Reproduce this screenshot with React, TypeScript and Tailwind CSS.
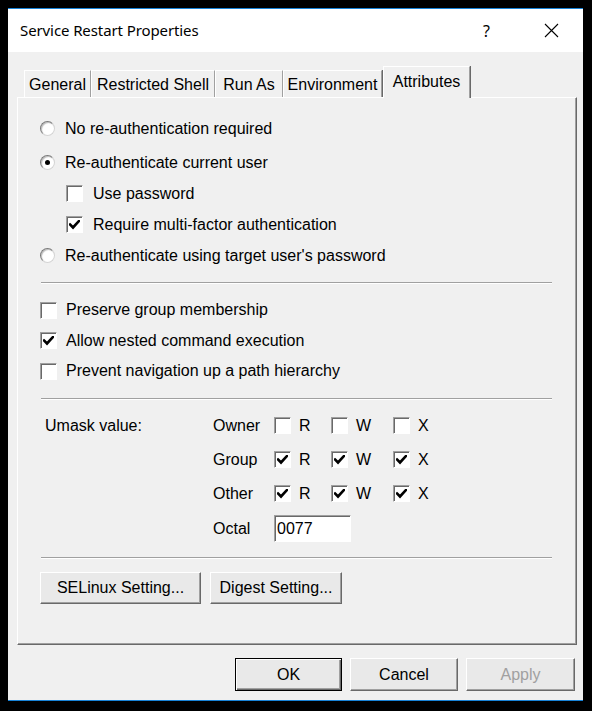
import React from "react";

const font = "font-['Liberation_Sans',Arial,sans-serif]";

function Check() {
  return (
    <svg width="11" height="10" viewBox="0 0 11 10" className="block">
      <path d="M1 4.5 L4 7.5 L10 1" fill="none" stroke="#000" strokeWidth="2.6" strokeLinecap="square" />
    </svg>
  );
}

function Box({ checked = false }: { checked?: boolean }) {
  return (
    <span className="flex h-[17px] w-[17px] shrink-0 items-center justify-center border border-t-[#a0a0a0] border-l-[#a0a0a0] border-r-white border-b-white bg-white shadow-[inset_1px_1px_0_#696969]">
      {checked && <Check />}
    </span>
  );
}

function Radio({ checked = false }: { checked?: boolean }) {
  return (
    <span className="flex h-[15px] w-[15px] shrink-0 items-center justify-center rounded-full border border-t-[#7a7a7a] border-l-[#7a7a7a] border-r-[#d4d4d4] border-b-[#d4d4d4] bg-white shadow-[inset_1px_1px_1px_#bdbdbd]">
      {checked && <span className="h-[5px] w-[5px] rounded-full bg-black" />}
    </span>
  );
}

function Sep() {
  return <div className="ml-[23px] mr-[24px] h-[2px] border-t border-t-[#a0a0a0] border-b border-b-white" />;
}

function Btn({ label, className = "", disabled = false, def = false }: { label: string; className?: string; disabled?: boolean; def?: boolean }) {
  return (
    <div
      className={`flex items-center justify-center bg-[#e9e9e9] ${
        def
          ? "border border-black shadow-[inset_1px_1px_0_#fff,inset_-1px_-1px_0_#696969,inset_-2px_-2px_0_#a0a0a0]"
          : "border border-t-white border-l-white border-r-[#696969] border-b-[#696969] shadow-[inset_-1px_-1px_0_#a0a0a0]"
      } ${disabled ? "text-[#a0a0a0]" : "text-black"} ${className}`}
    >
      {label}
    </div>
  );
}

const tabs = [
  { label: "General", w: "w-[67px]" },
  { label: "Restricted Shell", w: "w-[124px]" },
  { label: "Run As", w: "w-[68px]" },
  { label: "Environment", w: "w-[99px]" },
];

function Perm({ label, on, w }: { label: string; on: boolean; w: string }) {
  return (
    <div className={`flex items-center ${w}`}>
      <Box checked={on} />
      <span className="ml-[8px]">{label}</span>
    </div>
  );
}

function UmaskRow({ name, on }: { name: string; on: boolean }) {
  return (
    <div className="flex h-[34px] items-center">
      <span className="w-[61px]">{name}</span>
      <Perm label="R" on={on} w="w-[57px]" />
      <Perm label="W" on={on} w="w-[62px]" />
      <Perm label="X" on={on} w="w-[40px]" />
    </div>
  );
}

export default function App() {
  return (
    <div className={`h-[711px] w-[592px] bg-black pb-[10px] pl-[8px] pr-[9px] pt-[8px] text-[16px] text-black ${font}`}>
      <div className="flex h-full flex-col border-y border-[#1883d7] bg-[#f0f0f0]">
        <div className="flex h-[43px] shrink-0 items-center bg-white pl-[12px]">
          <span className="font-['Noto_Sans',sans-serif] text-[15px] tracking-[-0.1px]">Service Restart Properties</span>
          <span className="ml-auto mr-[54px] font-['Noto_Sans',sans-serif] text-[16px]">?</span>
          <svg width="15" height="15" viewBox="0 0 15 15" className="mr-[24px]">
            <path d="M1 1 L14 14 M14 1 L1 14" stroke="#000" strokeWidth="1.1" />
          </svg>
        </div>

        <div className="ml-[16px] mt-[14px] flex h-[31px] items-end">
          {tabs.map((t) => (
            <div
              key={t.label}
              className={`flex h-[27px] items-center justify-center border-l border-t border-l-white border-t-white border-r border-r-[#a0a0a0] pt-[1px] shadow-[1px_0_0_#696969] ${t.w}`}
            >
              {t.label}
            </div>
          ))}
          <div className="relative z-10 -mb-[1px] ml-[1px] flex h-[32px] w-[87px] items-start justify-center border-l border-t border-l-white border-t-white border-r border-r-[#a0a0a0] bg-[#f0f0f0] pt-[3px] shadow-[1px_0_0_#696969]">
            Attributes
          </div>
        </div>

        <div className="ml-[9px] flex h-[548px] w-[560px] flex-col border border-t-white border-l-white border-r-[#696969] border-b-[#696969] shadow-[inset_-1px_-1px_0_#a0a0a0]">
          <div className="pl-[22px] pt-[15px]">
            <div className="flex h-[31px] items-center">
              <Radio />
              <span className="ml-[10px]">No re-authentication required</span>
            </div>
            <div className="mt-[3px] flex h-[31px] items-center">
              <Radio checked />
              <span className="ml-[10px]">Re-authenticate current user</span>
            </div>
            <div className="flex h-[31px] items-center pl-[26px]">
              <Box />
              <span className="ml-[10px]">Use password</span>
            </div>
            <div className="flex h-[31px] items-center pl-[26px]">
              <Box checked />
              <span className="ml-[10px]">Require multi-factor authentication</span>
            </div>
            <div className="flex h-[31px] items-center">
              <Radio />
              <span className="ml-[10px]">Re-authenticate using target user's password</span>
            </div>
          </div>

          <div className="mt-[11px]">
            <Sep />
          </div>

          <div className="mt-[11px] pl-[22px]">
            <div className="flex h-[30.5px] items-center">
              <Box />
              <span className="ml-[9px]">Preserve group membership</span>
            </div>
            <div className="flex h-[30.5px] items-center">
              <Box checked />
              <span className="ml-[9px]">Allow nested command execution</span>
            </div>
            <div className="flex h-[30.5px] items-center">
              <Box />
              <span className="ml-[9px]">Prevent navigation up a path hierarchy</span>
            </div>
          </div>

          <div className="mt-[11px]">
            <Sep />
          </div>

          <div className="mt-[9px] flex pl-[22px]">
            <div className="w-[173px] pl-[5px] leading-[34px]">Umask value:</div>
            <div>
              <UmaskRow name="Owner" on={false} />
              <UmaskRow name="Group" on />
              <UmaskRow name="Other" on />
              <div className="mt-[1px] flex h-[34px] items-center">
                <span className="w-[61px]">Octal</span>
                <div className="flex h-[27px] w-[77px] items-center border border-t-[#a0a0a0] border-l-[#a0a0a0] border-r-white border-b-white bg-white pl-[2px] shadow-[inset_1px_1px_0_#696969]">
                  0077
                </div>
              </div>
            </div>
          </div>

          <div className="mt-[11px]">
            <Sep />
          </div>

          <div className="ml-[22px] mt-[13px] flex gap-[9px]">
            <Btn label="SELinux Setting..." className="h-[32px] w-[161px]" />
            <Btn label="Digest Setting..." className="h-[32px] w-[132px]" />
          </div>
        </div>

        <div className="mr-[8px] mt-[13px] flex justify-end gap-[8px]">
          <Btn label="OK" def className="h-[33px] w-[107px]" />
          <Btn label="Cancel" className="h-[33px] w-[108px]" />
          <Btn label="Apply" disabled className="h-[33px] w-[109px]" />
        </div>
      </div>
    </div>
  );
}
